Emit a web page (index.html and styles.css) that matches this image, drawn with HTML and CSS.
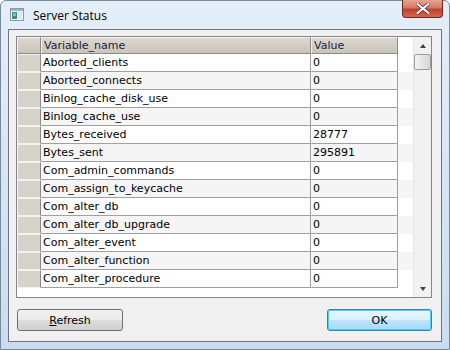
FILE: index.html
```html
<!DOCTYPE html>
<html lang="en">
<head>
    <meta charset="UTF-8">
    <title>Server Status</title>
    <link rel="stylesheet" href="styles.css">
</head>
<body>
    <div class="window">
        <!-- title bar -->
        <div class="titlebar">
            <svg class="app-icon" width="14" height="13" viewBox="0 0 14 13">
                <rect x="0.5" y="0.5" width="13" height="12" fill="#f4f6f8" stroke="#8a96a2"/>
                <rect x="1" y="1" width="12" height="2" fill="#9fb4c8"/>
                <rect x="2" y="4" width="5" height="7" fill="#3d8f7a"/>
                <rect x="3" y="5" width="3" height="3" fill="#6fc0e0"/>
                <rect x="8" y="4" width="4" height="7" fill="#dfe6ec"/>
            </svg>
            <span class="title">Server Status</span>
            <div class="close-btn">
                <svg width="14" height="11" viewBox="0 0 14 11">
                    <path d="M1.5 1 L12.5 10 M12.5 1 L1.5 10" stroke="#5a2a2a" stroke-width="3.4" stroke-linecap="square"/>
                    <path d="M1.5 1 L12.5 10 M12.5 1 L1.5 10" stroke="#ffffff" stroke-width="2" stroke-linecap="square"/>
                </svg>
            </div>
        </div>

        <div class="client">
            <!-- status grid -->
            <div class="grid">
                <div class="grid-body">
                    <div class="row head">
                        <div class="cell rh"></div>
                        <div class="cell name">Variable_name</div>
                        <div class="cell value">Value</div>
                    </div>
                    <div id="rows"></div>
                </div>
                <div class="vscroll">
                    <div class="arrow up"></div>
                    <div class="thumb"></div>
                    <div class="track"></div>
                    <div class="arrow down"></div>
                </div>
            </div>

            <div class="buttons">
                <button class="btn"><u>R</u>efresh</button>
                <button class="btn default">OK</button>
            </div>
        </div>
    </div>

    <script>
        // server variables shown in the grid
        const vars = [
            ['Aborted_clients', '0'],
            ['Aborted_connects', '0'],
            ['Binlog_cache_disk_use', '0'],
            ['Binlog_cache_use', '0'],
            ['Bytes_received', '28777'],
            ['Bytes_sent', '295891'],
            ['Com_admin_commands', '0'],
            ['Com_assign_to_keycache', '0'],
            ['Com_alter_db', '0'],
            ['Com_alter_db_upgrade', '0'],
            ['Com_alter_event', '0'],
            ['Com_alter_function', '0'],
            ['Com_alter_procedure', '0']
        ];

        const rows = document.getElementById('rows');
        vars.forEach(([name, value], i) => {
            const row = document.createElement('div');
            row.className = 'row' + (i % 2 ? ' alt' : '');
            row.innerHTML = `<div class="cell rh"></div><div class="cell name">${name}</div><div class="cell value">${value}</div>`;
            rows.appendChild(row);
        });
    </script>
</body>
</html>
```

FILE: styles.css
```css
body {
    margin: 0;
    background: #ffffff;
    font-family: "DejaVu Sans", Verdana, sans-serif;
}

.window {
    width: 450px;
    height: 350px;
    box-sizing: border-box;
    display: flex;
    flex-direction: column;
    background: linear-gradient(to bottom, #e4eef8 0%, #dce9f6 30%, #cadcf0 100%);
    border: 1px solid #7a8a9c;
    border-radius: 6px 6px 0 0;
}

.titlebar {
    height: 29px;
    display: flex;
    align-items: flex-start;
    position: relative;
}

.app-icon {
    margin: 7px 0 0 9px;
}

.title {
    margin: 6px 0 0 9px;
    font-family: "Open Sans", "Noto Sans", sans-serif;
    font-size: 12px;
    color: #000;
}

.close-btn {
    position: absolute;
    right: 6px;
    top: -1px;
    width: 41px;
    height: 18px;
    box-sizing: border-box;
    border: 1px solid #6b2b22;
    border-top: none;
    border-radius: 0 0 4px 4px;
    background: linear-gradient(to bottom, #e8a493 0%, #d47866 45%, #c0412c 55%, #d2664f 100%);
    display: flex;
    justify-content: center;
    align-items: center;
}

.client {
    flex: 1;
    margin: 0 7px 7px 7px;
    background: #f0f0f0;
    border: 1px solid #6c7580;
    padding: 6px 9px 10px 7px;
    display: flex;
    flex-direction: column;
}

.grid {
    height: 260px;
    border: 1px solid #828790;
    background: #ffffff;
    display: flex;
}

.grid-body {
    flex: 1;
}

.row {
    display: flex;
    height: 18px;
    font-size: 11px;
    line-height: 17px;
}

.row.alt {
    background: #f5f5f5;
}

.cell {
    box-sizing: border-box;
    border-right: 1px solid #a0a0a0;
    border-bottom: 1px solid #a0a0a0;
    padding-left: 2px;
    white-space: nowrap;
    overflow: hidden;
    color: #000;
}

.cell.rh {
    width: 24px;
    background: #d6d3cb;
    border-top: 1px solid #f4f3ef;
    border-left: 1px solid #f4f3ef;
    border-right: 1px solid #8c8a84;
    border-bottom: 1px solid #f4f3ef;
}

.cell.name {
    width: 270px;
}

.cell.value {
    width: 87px;
}

.row.head {
    height: 17px;
    line-height: 16px;
}

.row.head .cell {
    background: linear-gradient(to bottom, #dcd8cf, #c9c5ba);
    color: #1c1c40;
    border-top: 1px solid #f2f1ec;
    border-left: 1px solid #f2f1ec;
    border-right: 1px solid #8c8a84;
    border-bottom: 1px solid #8c8a84;
}

.row.head .cell.rh {
    border-bottom: 1px solid #8c8a84;
}

.vscroll {
    width: 17px;
    background: #f1f1f1;
    display: flex;
    flex-direction: column;
    border-left: 1px solid #e6e6e6;
}

.arrow {
    height: 17px;
    display: flex;
    justify-content: center;
    align-items: center;
}

.arrow::before {
    content: "";
    border-left: 3px solid transparent;
    border-right: 3px solid transparent;
}

.arrow.up::before {
    border-bottom: 4px solid #404040;
}

.arrow.down::before {
    border-top: 4px solid #404040;
}

.thumb {
    height: 16px;
    margin: 0 0 0 0;
    box-sizing: border-box;
    border: 1px solid #9c9c9c;
    border-radius: 2px;
    background: linear-gradient(to right, #f4f4f4, #e4e4e4 50%, #d6d6d6);
}

.track {
    flex: 1;
}

.buttons {
    display: flex;
    justify-content: space-between;
    margin-top: 11px;
    padding-left: 1px;
}

.btn {
    width: 106px;
    height: 22px;
    font-family: "DejaVu Sans", Verdana, sans-serif;
    font-size: 11px;
    color: #000;
    border: 1px solid #707070;
    border-radius: 3px;
    background: linear-gradient(to bottom, #f2f2f2 0%, #ebebeb 50%, #dddddd 50%, #cfcfcf 100%);
    padding: 0;
}

.btn.default {
    width: 105px;
    border-color: #3c7fb1;
    box-shadow: inset 0 0 0 1px #48d2fb;
    background: linear-gradient(to bottom, #eaf6fd 0%, #d9f0fc 50%, #bee6fd 50%, #a7d9f5 100%);
}
```
